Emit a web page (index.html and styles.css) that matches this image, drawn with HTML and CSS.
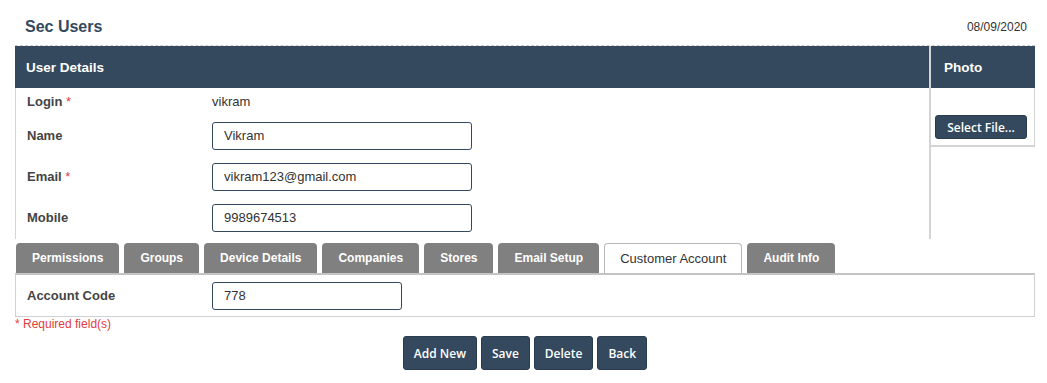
FILE: index.html
```html
<!DOCTYPE html>
<html>
<head>
<meta charset="utf-8">
<link rel="stylesheet" href="styles.css">
</head>
<body>
<div class="page">
  <div class="top">
    <div class="title">Sec Users</div>
    <div class="date">08/09/2020</div>
  </div>
  <div class="details">
    <div class="main-col">
      <div class="bar">User Details</div>
      <div class="fields">
        <div class="row row-login">
          <div class="label">Login <span class="req">*</span></div>
          <div class="value">vikram</div>
        </div>
        <div class="row">
          <div class="label">Name</div>
          <div class="input">Vikram</div>
        </div>
        <div class="row">
          <div class="label">Email <span class="req">*</span></div>
          <div class="input">vikram123@gmail.com</div>
        </div>
        <div class="row">
          <div class="label">Mobile</div>
          <div class="input">9989674513</div>
        </div>
      </div>
    </div>
    <div class="photo-col">
      <div class="bar bar-photo">Photo</div>
      <div class="photo-box">
        <button class="btn btn-file">Select File...</button>
      </div>
    </div>
  </div>
  <div class="tabs">
    <div class="tab">Permissions</div>
    <div class="tab">Groups</div>
    <div class="tab">Device Details</div>
    <div class="tab">Companies</div>
    <div class="tab">Stores</div>
    <div class="tab">Email Setup</div>
    <div class="tab active">Customer Account</div>
    <div class="tab">Audit Info</div>
  </div>
  <div class="tab-content">
    <div class="row row-acc">
      <div class="label">Account Code</div>
      <div class="input input-short">778</div>
    </div>
  </div>
  <div class="required">* Required field(s)</div>
  <div class="actions">
    <button class="btn">Add New</button>
    <button class="btn">Save</button>
    <button class="btn">Delete</button>
    <button class="btn">Back</button>
  </div>
</div>
</body>
</html>
```

FILE: styles.css
```css
* { box-sizing: border-box; }
body {
  margin: 0;
  font-family: "Liberation Sans", Arial, sans-serif;
  color: #333;
  background: #fff;
}
.page {
  padding: 0 12px 0 15px;
}
.top {
  height: 45px;
  padding: 9px 8px 0 10px;
  display: flex;
  align-items: center;
  justify-content: space-between;
}
.title {
  font-size: 16px;
  font-weight: bold;
  color: #34495e;
}
.date {
  font-size: 12px;
  color: #333;
}
.details {
  display: grid;
  grid-template-columns: 1fr 105px;
  border-top: 1px dashed #cfcfcf;
}
.bar {
  height: 42px;
  background: #34495e;
  color: #fff;
  font-size: 13.5px;
  font-weight: bold;
  display: flex;
  align-items: center;
  padding-left: 11px;
}
.bar-photo {
  padding-left: 13px;
}
.main-col {
  display: flex;
  flex-direction: column;
}
.fields {
  border-left: 1px solid #d4d4d4;
  padding-bottom: 1px;
}
.row {
  display: flex;
  align-items: center;
  height: 41px;
  padding-left: 11px;
}
.row-login {
  height: 27px;
}
.label {
  width: 185px;
  font-size: 13px;
  font-weight: bold;
  color: #444;
}
.req {
  color: #e03c3c;
  font-weight: normal;
}
.value {
  font-size: 13px;
  color: #333;
}
.input {
  width: 260px;
  height: 28px;
  border: 1px solid #34495e;
  border-radius: 3px;
  padding-left: 11px;
  font-size: 13px;
  color: #333;
  display: flex;
  align-items: center;
}
.input-short {
  width: 190px;
}
.photo-col {
  border-left: 2px solid #d4d4d4;
  margin-left: -1px;
}
.photo-box {
  height: 59px;
  border-right: 1px solid #d4d4d4;
  border-bottom: 2px solid #d4d4d4;
  display: flex;
  align-items: flex-end;
  padding: 0 0 6px 4px;
}
.btn {
  background: #34495e;
  color: #fff;
  border: 1px solid #2a3b4c;
  border-radius: 3px;
  font-family: "Open Sans", "DejaVu Sans", sans-serif;
  font-size: 12px;
  font-weight: 600;
  height: 34px;
  padding: 0 10px;
  margin: 0;
  cursor: pointer;
}
.btn-file {
  height: 24px;
  width: 92px;
  padding: 0;
}
.tabs {
  display: flex;
  gap: 5px;
  margin-top: 4px;
  padding-left: 1px;
  height: 30px;
}
.tab {
  background: #808080;
  color: #fff;
  font-size: 12px;
  font-weight: bold;
  padding: 0 16px;
  border-radius: 4px 4px 0 0;
  display: flex;
  align-items: center;
}
.tab.active {
  background: #fff;
  color: #333;
  font-weight: normal;
  font-size: 13px;
  border: 1px solid #b8b8b8;
  border-bottom: none;
  padding: 0 15px;
}
.tab-content {
  border: 1px solid #d0d0d0;
  border-top: 2px solid #c4c4c4;
  height: 44px;
  display: flex;
  align-items: center;
}
.row-acc {
  height: 28px;
}
.required {
  font-size: 12px;
  color: #e03c3c;
  margin-top: 0;
  height: 16px;
}
.actions {
  display: flex;
  justify-content: center;
  gap: 4px;
  margin-top: 3px;
}
```
